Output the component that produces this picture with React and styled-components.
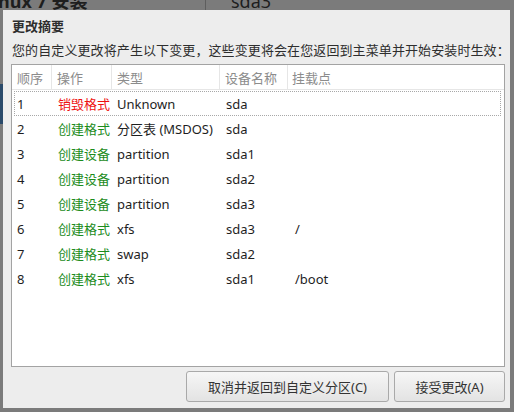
import React from 'react';
import styled, { createGlobalStyle } from 'styled-components';

const GlobalStyle = createGlobalStyle`
  html, body {
    margin: 0;
    padding: 0;
    background: #7b7b7b;
  }
  body {
    font-family: "Noto Sans", "Noto Sans CJK SC", sans-serif;
  }
`;

const Backdrop = styled.div`
  position: relative;
  width: 514px;
  height: 412px;
  overflow: hidden;
  background: #7b7b7b;
`;

const BackBar = styled.div`
  display: flex;
  height: 10px;
  overflow: hidden;
`;

const BackTitle = styled.div`
  flex: 0 0 208px;
  box-sizing: border-box;
  margin-top: -10px;
  margin-left: -2px;
  font-size: 18px;
  line-height: 22px;
  font-weight: bold;
  color: #1e1e1e;
  white-space: nowrap;
  border-right: 1px solid #5e5e5e;
`;

const BackCell = styled.div`
  margin-top: -10px;
  padding-left: 25px;
  font-size: 18px;
  line-height: 22px;
  color: #1e1e1e;
`;

const SideStrip = styled.div`
  position: absolute;
  left: 0;
  top: 84px;
  width: 3px;
  height: 40px;
  background: #2a4a6a;
`;

const Dialog = styled.div`
  position: absolute;
  left: 3px;
  top: 10px;
  width: 507px;
  height: 398px;
  background: #ededed;
  box-sizing: border-box;
  display: flex;
  flex-direction: column;
  padding: 8px 5px 0 8px;
  color: #2e2e2e;
`;

const Title = styled.div`
  font-size: 13px;
  line-height: 16px;
  font-weight: bold;
  padding-left: 1px;
  color: #2e2e2e;
`;

const Subtitle = styled.div`
  margin-top: 8px;
  font-size: 13px;
  line-height: 16px;
  padding-left: 1px;
  color: #2e2e2e;
  white-space: nowrap;
  letter-spacing: 0.1px;
`;

const Table = styled.div`
  margin-top: 6px;
  width: 494px;
  height: 303px;
  box-sizing: border-box;
  background: #ffffff;
  border: 1px solid #a3a3a3;
  display: flex;
  flex-direction: column;
`;

const columns = '40px 60px 108px 68px 1fr';

const HeaderRow = styled.div`
  display: grid;
  grid-template-columns: ${columns};
  height: 24px;
  border-bottom: 1px solid #e6e6e6;
`;

const HeaderCell = styled.div`
  display: flex;
  align-items: center;
  padding-left: ${p => p.$pad || 5}px;
  font-size: 13px;
  color: #8c8c8c;
  border-right: ${p => (p.$last ? 'none' : '1px solid #e6e6e6')};
`;

const Body = styled.div`
  display: flex;
  flex-direction: column;
  padding-top: 1px;
`;

const Row = styled.div`
  display: grid;
  grid-template-columns: ${columns};
  height: 25px;
  box-sizing: border-box;
  border: 1px dotted ${p => (p.$focused ? '#a8a8a8' : 'transparent')};
  margin: 0 3px 0 2px;
`;

const Cell = styled.div`
  display: flex;
  align-items: center;
  padding-left: ${p => p.$pad || 2}px;
  font-size: 13px;
  color: ${p => p.$color || '#1e1e1e'};
  white-space: nowrap;
`;

const Actions = styled.div`
  display: flex;
  justify-content: flex-end;
  gap: 5px;
  margin-top: 4px;
  width: 494px;
`;

const Button = styled.button`
  height: 31px;
  width: ${p => p.$width}px;
  box-sizing: border-box;
  border: 1px solid #a9a9a9;
  border-radius: 3px;
  background: linear-gradient(#f6f6f6, #e3e3e3);
  font-family: "Noto Sans", "Noto Sans CJK SC", sans-serif;
  font-size: 13px;
  color: #333333;
  padding: 0;
  cursor: pointer;
`;

const RED = '#ee1111';
const GREEN = '#1c8c1c';

const rows = [
  { n: 1, op: '销毁格式', color: RED, type: 'Unknown', dev: 'sda', mount: '' },
  { n: 2, op: '创建格式', color: GREEN, type: '分区表 (MSDOS)', dev: 'sda', mount: '' },
  { n: 3, op: '创建设备', color: GREEN, type: 'partition', dev: 'sda1', mount: '' },
  { n: 4, op: '创建设备', color: GREEN, type: 'partition', dev: 'sda2', mount: '' },
  { n: 5, op: '创建设备', color: GREEN, type: 'partition', dev: 'sda3', mount: '' },
  { n: 6, op: '创建格式', color: GREEN, type: 'xfs', dev: 'sda3', mount: '/' },
  { n: 7, op: '创建格式', color: GREEN, type: 'swap', dev: 'sda2', mount: '' },
  { n: 8, op: '创建格式', color: GREEN, type: 'xfs', dev: 'sda1', mount: '/boot' },
];

const App = () => {
  return (
    <>
      <GlobalStyle />
      <Backdrop>
        <BackBar>
          <BackTitle>nux 7 安装</BackTitle>
          <BackCell>sda3</BackCell>
        </BackBar>
        <SideStrip />
        <Dialog>
          <Title>更改摘要</Title>
          <Subtitle>您的自定义更改将产生以下变更，这些变更将会在您返回到主菜单并开始安装时生效：</Subtitle>
          <Table>
            <HeaderRow>
              <HeaderCell>顺序</HeaderCell>
              <HeaderCell>操作</HeaderCell>
              <HeaderCell>类型</HeaderCell>
              <HeaderCell>设备名称</HeaderCell>
              <HeaderCell $last $pad={4}>挂载点</HeaderCell>
            </HeaderRow>
            <Body>
              {rows.map((r, i) => (
                <Row key={r.n} $focused={i === 0}>
                  <Cell $pad={2}>{r.n}</Cell>
                  <Cell $pad={3} $color={r.color}>{r.op}</Cell>
                  <Cell $pad={2}>{r.type}</Cell>
                  <Cell $pad={3}>{r.dev}</Cell>
                  <Cell $pad={4}>{r.mount}</Cell>
                </Row>
              ))}
            </Body>
          </Table>
          <Actions>
            <Button $width={203}>取消并返回到自定义分区(C)</Button>
            <Button $width={111}>接受更改(A)</Button>
          </Actions>
        </Dialog>
      </Backdrop>
    </>
  );
};

export default App;
